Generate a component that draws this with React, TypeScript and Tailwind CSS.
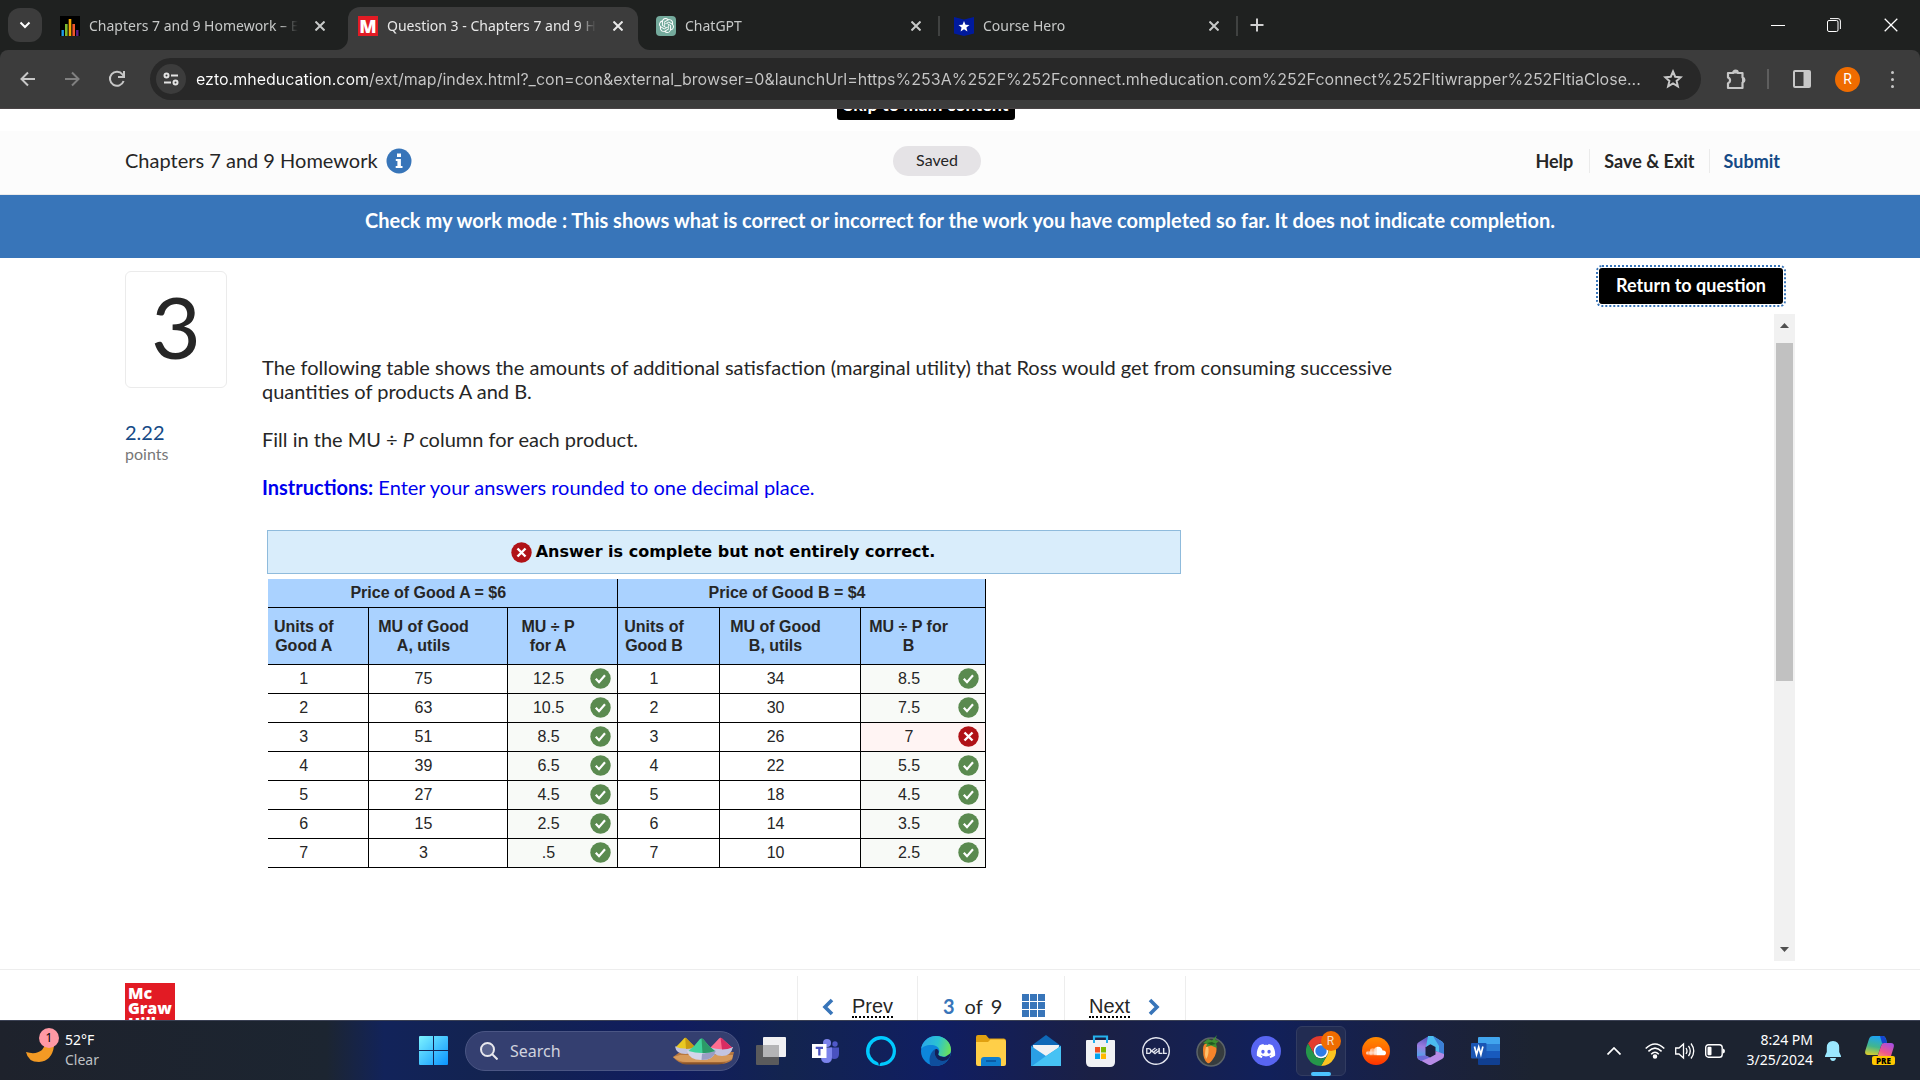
import React, { useId } from 'react';
import type { ReactNode } from 'react';
import { SiDell, SiOpenai } from 'react-icons/si';
import { FaDiscord, FaSoundcloud } from 'react-icons/fa';

const URL_TEXT =
  'ezto.mheducation.com/ext/map/index.html?_con=con&external_browser=0&launchUrl=https%253A%252F%252Fconnect.mheducation.com%252Fconnect%252Fltiwrapper%252FltiaClose...';

/* ---------- Browser window ---------- */

function Cross({ size = 10, width = 2 }: { size?: number; width?: number }) {
  return (
    <svg width={size} height={size} viewBox="0 0 10 10" aria-hidden="true">
      <path d="M0.5 0.5 9.5 9.5M9.5 0.5 0.5 9.5" stroke="currentColor" strokeWidth={width} />
    </svg>
  );
}

function EqualizerIcon() {
  return (
    <svg width="20" height="20" viewBox="0 0 20 20" aria-hidden="true">
      <rect width="20" height="20" fill="#000" />
      <rect x="1.5" y="14" width="2.4" height="6" fill="#1e9be9" />
      <rect x="5" y="8" width="2.6" height="12" fill="#7cb82f" />
      <rect x="8.7" y="3" width="2.6" height="17" fill="#f5a800" />
      <rect x="12.4" y="8" width="2.6" height="12" fill="#f0562b" />
      <rect x="16.1" y="14" width="2.4" height="6" fill="#5c1f87" />
    </svg>
  );
}

function McGrawIcon() {
  return (
    <span className="grid size-5 place-items-center bg-[#e21b24] font-['Open_Sans',sans-serif] text-lg leading-5 font-extrabold text-white">
      M
    </span>
  );
}

function ChatGptIcon() {
  return (
    <span className="grid size-5 place-items-center rounded-[4px] bg-[#74aa9c] text-white">
      <SiOpenai size={15} />
    </span>
  );
}

function CourseHeroIcon() {
  return (
    <svg width="20" height="20" viewBox="0 0 20 20" aria-hidden="true">
      <path d="M0 1 10 3.5 20 1V17.5L10 20 0 17.5Z" fill="#001a9c" />
      <path d="m10 5 1.5 3.7 4 .3-3.1 2.5 1 3.9-3.4-2.1-3.4 2.1 1-3.9L4.500 9l4-.3Z" fill="#fff" />
    </svg>
  );
}

type TabProps = { icon: ReactNode; title: string; active?: boolean; separator?: boolean };

function Tab({ icon, title, active, separator }: TabProps) {
  return (
    <div className="flex h-full w-[298px] min-w-0 items-center">
      <div
        className={
          active
            ? 'relative flex h-full w-[290px] items-center gap-2 rounded-t-xl bg-[#3c3c3c] px-2.5 pb-1.5 text-[#e8e8e8]'
            : 'relative flex h-full w-[290px] items-center gap-2 px-2.5 pb-1.5 text-[#c7c9c8]'
        }
      >
        {active && (
          <>
            <svg className="absolute bottom-0 -left-3" width="12" height="12" aria-hidden="true">
              <path d="M12 0V12H0A12 12 0 0 0 12 0Z" fill="#3c3c3c" />
            </svg>
            <svg className="absolute -right-3 bottom-0" width="12" height="12" aria-hidden="true">
              <path d="M0 0V12H12A12 12 0 0 1 0 0Z" fill="#3c3c3c" />
            </svg>
          </>
        )}
        <span className="shrink-0">{icon}</span>
        <button
          type="button"
          className="min-w-0 flex-1 overflow-hidden pl-px text-left text-sm leading-5 whitespace-nowrap [mask-image:linear-gradient(90deg,#000_91%,transparent)]"
        >
          {title}
        </button>
        <button type="button" aria-label={'Close ' + title} className="ml-1 grid size-5 place-items-center">
          <Cross />
        </button>
      </div>
      {separator && <span className="mb-1.5 ml-0.5 h-5 w-0.5 bg-[#404241]" />}
    </div>
  );
}

function TabStrip() {
  return (
    <div className="flex h-[50px] items-stretch bg-[#1f2120] pl-2">
      <button
        type="button"
        aria-label="Search tabs"
        className="mt-2 grid size-[34px] place-items-center rounded-xl bg-[#3c3c3c] text-white"
      >
        <svg width="12" height="12" viewBox="0 0 12 12" fill="none" aria-hidden="true">
          <path d="m1.500 3.500 4.500 4.500 4.500-4.500" stroke="currentColor" strokeWidth="2" />
        </svg>
      </button>
      <div className="ml-2 flex pt-[7px]">
        <Tab icon={<EqualizerIcon />} title="Chapters 7 and 9 Homework – Economics" />
        <Tab icon={<McGrawIcon />} title="Question 3 - Chapters 7 and 9 Homework" active />
        <Tab icon={<ChatGptIcon />} title="ChatGPT" separator />
        <Tab icon={<CourseHeroIcon />} title="Course Hero" separator />
      </div>
      <button type="button" aria-label="New tab" className="ml-2 self-center text-[#d0d0d0]">
        <svg width="14" height="14" viewBox="0 0 14 14" aria-hidden="true">
          <path d="M7 0.500V13.500M0.500 7H13.500" stroke="currentColor" strokeWidth="2" />
        </svg>
      </button>
      <div className="ml-auto flex text-white">
        <button type="button" aria-label="Minimize" className="grid w-14 place-items-center">
          <span className="h-px w-3.5 bg-white" />
        </button>
        <button type="button" aria-label="Restore" className="grid w-14 place-items-center">
          <svg width="14" height="14" viewBox="0 0 14 14" fill="none" stroke="currentColor" aria-hidden="true">
            <rect x="0.500" y="2.500" width="10.500" height="11" rx="1.500" />
            <path d="M3 .6H11A2.500 2.500 0 0 1 13.400 3V11" />
          </svg>
        </button>
        <button type="button" aria-label="Close window" className="grid w-[58px] place-items-center">
          <Cross size={14} width={0.9} />
        </button>
      </div>
    </div>
  );
}

function Toolbar() {
  return (
    <div className="bg-[#1f2120]">
      <div className="flex h-[59px] items-center rounded-t-lg border-b border-[#4a4446] bg-[#3c3c3c] pr-4 text-[#c7c7c7]">
        <button type="button" aria-label="Back" className="ml-5 grid size-4 place-items-center">
          <svg width="16" height="16" viewBox="0 0 16 16" fill="none" stroke="currentColor" strokeWidth="2" aria-hidden="true">
            <path d="M15 8H2M8 1.500 1.500 8 8 14.500" />
          </svg>
        </button>
        <button type="button" aria-label="Forward" className="ml-7 grid size-4 place-items-center text-[#808080]">
          <svg width="16" height="16" viewBox="0 0 16 16" fill="none" stroke="currentColor" strokeWidth="2" aria-hidden="true">
            <path d="M1 8H14M8 1.500 14.500 8 8 14.500" />
          </svg>
        </button>
        <button type="button" aria-label="Reload" className="ml-7 grid size-[18px] place-items-center">
          <svg width="18" height="18" viewBox="0 0 18 18" fill="none" stroke="currentColor" strokeWidth="2" aria-hidden="true">
            <path d="M15.600 11A7 7 0 1 1 14.500 4.500L16 6.500" />
            <path d="M16 1V7H10" />
          </svg>
        </button>
        <div className="ml-6 flex h-[42px] min-w-0 flex-1 items-center rounded-full bg-[#282828] pr-[18px] pl-1.5">
          <button
            type="button"
            aria-label="View site information"
            className="grid size-[30px] shrink-0 place-items-center rounded-full bg-[#3c3c3c] text-[#e3e3e3]"
          >
            <svg width="16" height="14" viewBox="0 0 16 14" fill="none" stroke="currentColor" strokeWidth="2" aria-hidden="true">
              <circle cx="3.500" cy="3.500" r="2" />
              <path d="M8 3.500H15M1 10.500H8" />
              <circle cx="12.500" cy="10.500" r="2" />
            </svg>
          </button>
          <input
            type="text"
            aria-label="Address"
            defaultValue={URL_TEXT}
            className="ml-2.5 min-w-0 flex-1 bg-[linear-gradient(90deg,#ffffff_174px,#c7c7c7_174px)] bg-clip-text font-['Inter',sans-serif] text-base leading-6 text-transparent outline-none"
          />
          <button type="button" aria-label="Bookmark this tab" className="ml-2 shrink-0">
            <svg width="20" height="20" viewBox="0 0 20 20" fill="none" stroke="currentColor" strokeWidth="2" aria-hidden="true">
              <path d="m10 2.500 2.200 5.200 5.600.500-4.200 3.700 1.300 5.500-4.900-2.900-4.900 2.900 1.300-5.500L2.200 8.200l5.600-.500Z" />
            </svg>
          </button>
        </div>
        <button type="button" aria-label="Extensions" className="ml-6">
          <svg width="22" height="22" viewBox="0 0 22 22" aria-hidden="true">
            <path
              d="M3 5H8.200A2.300 2.300 0 0 1 12.800 5H17.500V9.500A2.600 2.600 0 0 1 17.500 14.500V20H3V15.200A3 3 0 0 0 3 9.500Z"
              fill="none"
              stroke="currentColor"
              strokeWidth="2.200"
              strokeLinejoin="round"
            />
            <path d="M8 5.500A2.500 2.500 0 0 1 13 5.500ZM17 9.400A2.600 2.600 0 0 1 17 14.600Z" fill="currentColor" />
          </svg>
        </button>
        <span className="ml-5 h-5 w-0.5 bg-[#5e5e5e]" />
        <button type="button" aria-label="Side panel" className="ml-6">
          <svg width="18" height="18" viewBox="0 0 18 18" aria-hidden="true">
            <rect x="1" y="1" width="16" height="16" rx="1" fill="none" stroke="currentColor" strokeWidth="2" />
            <path d="M10.500 1H17V17H10.500Z" fill="currentColor" />
          </svg>
        </button>
        <button
          type="button"
          aria-label="Profile"
          className="ml-6 grid size-[25px] place-items-center rounded-full bg-[#ef6c00] font-['Roboto',sans-serif] text-sm leading-5 text-white"
        >
          R
        </button>
        <button type="button" aria-label="Chrome menu" className="ml-5 grid w-6 justify-items-center gap-1">
          <span className="size-[3px] rounded-full bg-current" />
          <span className="size-[3px] rounded-full bg-current" />
          <span className="size-[3px] rounded-full bg-current" />
        </button>
      </div>
    </div>
  );
}

/* ---------- Homework page ---------- */

function PageHeader() {
  return (
    <>
      <div className="flex h-[22px] justify-center overflow-hidden pr-[68px]">
        <a
          href="#question"
          className="-mt-[25px] flex h-9 w-[178px] items-center justify-center rounded-[3px] bg-black pt-1 text-lg leading-6 font-bold whitespace-nowrap text-white"
        >
          Skip to main content
        </a>
      </div>
      <header className="flex h-16 items-center border-b border-[#ebebeb] bg-[#fcfcfc] pr-[140px] pb-1 pl-[125px]">
        <div className="flex w-[768px] items-center gap-2">
          <h1 className="pb-0.5 text-xl leading-6">Chapters 7 and 9 Homework</h1>
          <button type="button" aria-label="Information">
            <svg width="26" height="26" viewBox="0 0 26 26" aria-hidden="true">
              <circle cx="13" cy="13" r="12.500" fill="#3875b9" />
              <path d="M11 5.500H15V8.900H11ZM9.800 11H14.900V18H16.500V20H9.700V18H11.400V13H9.800Z" fill="#fff" />
            </svg>
          </button>
        </div>
        <span className="grid h-[30px] w-[88px] place-items-center rounded-full bg-[#e5e3e6] pb-0.5 text-base leading-5">
          Saved
        </span>
        <nav className="ml-auto flex items-center text-lg leading-6 font-bold">
          <a href="#help" className="pr-4">Help</a>
          <a href="#save" className="border-l border-[#ebebeb] px-3.5">Save &amp; Exit</a>
          <a href="#submit" className="border-l border-[#ebebeb] pl-3.5 text-[#154a86]">Submit</a>
        </nav>
      </header>
      <p className="h-[63px] bg-[#3875b9] pt-[13px] text-center text-xl leading-6 font-bold text-white">
        Check my work mode : This shows what is correct or incorrect for the work you have completed so far. It does not
        indicate completion.
      </p>
    </>
  );
}

function CorrectMark() {
  return (
    <svg width="21" height="21" viewBox="0 0 21 21" role="img" aria-label="correct">
      <circle cx="10.500" cy="10.500" r="10.200" fill="#5a8a4f" />
      <path d="m5.800 10.800 3.200 3.400 6-7" fill="none" stroke="#fff" strokeWidth="2.200" />
    </svg>
  );
}

function WrongMark() {
  return (
    <svg width="21" height="21" viewBox="0 0 21 21" role="img" aria-label="incorrect">
      <circle cx="10.500" cy="10.500" r="10.200" fill="#b01217" />
      <path d="m6.500 6.500 8 8M14.500 6.500l-8 8" fill="none" stroke="#fff" strokeWidth="2.400" />
    </svg>
  );
}

const ROWS = [
  [1, 75, '12.5', 34, '8.5'],
  [2, 63, '10.5', 30, '7.5'],
  [3, 51, '8.5', 26, '7'],
  [4, 39, '6.5', 22, '5.5'],
  [5, 27, '4.5', 18, '4.5'],
  [6, 15, '2.5', 14, '3.5'],
  [7, 3, '.5', 10, '2.5'],
] as const;

function ValueCell({ children }: { children: ReactNode }) {
  return <td className="h-[29px] border border-l-0 border-black pr-7 text-center">{children}</td>;
}

function AnswerCell({ value, wrong }: { value: string; wrong?: boolean }) {
  return (
    <td className={wrong ? 'h-[29px] border border-black bg-[#fff4f3]' : 'h-[29px] border border-black bg-[#f8faf7]'}>
      <div className="flex items-center pr-1.5">
        <span className="flex-1 text-center">{value}</span>
        {wrong ? <WrongMark /> : <CorrectMark />}
      </div>
    </td>
  );
}

function UtilityTable() {
  return (
    <table className="mt-[5px] ml-1.5 w-[717px] table-fixed border-collapse font-['Liberation_Sans',Arial,sans-serif] text-base leading-[19px]">
      <colgroup>
        <col className="w-[100px]" />
        <col className="w-[139px]" />
        <col className="w-[110px]" />
        <col className="w-[102px]" />
        <col className="w-[141px]" />
        <col className="w-[125px]" />
      </colgroup>
      <thead className="bg-[#aad2ff]">
        <tr className="h-7">
          <th scope="colgroup" colSpan={3} className="border-r border-b border-black pr-7">
            Price of Good A = $6
          </th>
          <th scope="colgroup" colSpan={3} className="border-r border-b border-black pr-7">
            Price of Good B = $4
          </th>
        </tr>
        <tr className="h-[57px]">
          <th scope="col" className="border-r border-b border-black pr-7">Units of<br />Good A</th>
          <th scope="col" className="border-r border-b border-black pr-7">MU of Good<br />A, utils</th>
          <th scope="col" className="border-r border-b border-black pr-7">MU ÷ P<br />for A</th>
          <th scope="col" className="border-r border-b border-black pr-7">Units of<br />Good B</th>
          <th scope="col" className="border-r border-b border-black pr-7">MU of Good<br />B, utils</th>
          <th scope="col" className="border-r border-b border-black pr-7">MU ÷ P for<br />B</th>
        </tr>
      </thead>
      <tbody>
        {ROWS.map(([n, muA, perA, muB, perB]) => (
          <tr key={n}>
            <ValueCell>{n}</ValueCell>
            <ValueCell>{muA}</ValueCell>
            <AnswerCell value={perA} />
            <ValueCell>{n}</ValueCell>
            <ValueCell>{muB}</ValueCell>
            <AnswerCell value={perB} wrong={n === 3} />
          </tr>
        ))}
      </tbody>
    </table>
  );
}

function Question() {
  return (
    <main id="question" className="flex min-h-0 flex-1 pr-[125px] pb-2 pl-[125px]">
      <aside className="w-[102px] shrink-0 pt-[13px]">
        <div className="grid h-[117px] place-items-center rounded-md border border-[#ebebeb] pb-2 text-[86px] leading-[104px]">
          3
        </div>
        <p className="mt-8 text-xl leading-6 text-[#154a86]">2.22</p>
        <p className="text-base leading-5 text-[#777777]">points</p>
      </aside>
      <div className="flex min-w-0 flex-1 flex-col pl-[35px]">
        <button
          type="button"
          className="mt-2.5 mr-3 h-9 self-end rounded-[3px] bg-black px-[17px] pb-0.5 text-lg leading-6 font-bold text-white outline-2 outline-offset-1 outline-[#3875b9] outline-dotted"
        >
          Return to question
        </button>
        <div className="mt-2.5 flex min-h-0 flex-1">
          <div className="min-w-0 flex-1 pt-[41px]">
            <div className="max-w-[1140px] space-y-6 text-xl leading-6">
              <p>
                The following table shows the amounts of additional satisfaction (marginal utility) that Ross would get
                from consuming successive quantities of products A and B.
              </p>
              <p>
                Fill in the MU ÷ <em>P</em> column for each product.
              </p>
              <p className="text-[#0000ee]">
                <strong>Instructions:</strong> Enter your answers rounded to one decimal place.
              </p>
            </div>
            <p className="mt-[31px] ml-[5px] flex h-11 w-[914px] items-center justify-center gap-1 border border-[#8fbbdc] bg-[#d9edfb] pr-0.5 font-['DejaVu_Sans',Verdana,sans-serif] text-base leading-6 font-bold text-black">
              <WrongMark />
              Answer is complete but not entirely correct.
            </p>
            <UtilityTable />
          </div>
          <div className="flex w-[21px] flex-col items-center bg-[#f1f1f1]" aria-hidden="true">
            <svg className="mt-[9px] mb-[15px]" width="9" height="5">
              <path d="M4.500 0 9 5H0Z" fill="#505050" />
            </svg>
            <span className="h-[338px] w-[17px] bg-[#c1c1c1]" />
            <svg className="mt-auto mb-[9px]" width="9" height="5">
              <path d="M4.500 5 9 0H0Z" fill="#505050" />
            </svg>
          </div>
        </div>
      </div>
    </main>
  );
}

function Chevron({ flip }: { flip?: boolean }) {
  return (
    <svg className={flip ? '-scale-x-100' : ''} width="12" height="18" viewBox="0 0 12 18" fill="none" aria-hidden="true">
      <path d="M10 2 3 9l7 7" stroke="#3875b9" strokeWidth="3.600" />
    </svg>
  );
}

function PageFooter() {
  return (
    <footer className="relative flex h-[51px] overflow-hidden border-t border-[#ededed] pl-[125px]">
      <a
        href="#home"
        className="mt-[13px] block h-[50px] w-[50px] bg-[#e21b24] pt-[3px] pl-[3px] font-['Open_Sans',sans-serif] text-base leading-[15px] font-extrabold text-white"
      >
        Mc
        <br />
        Graw
        <br />
        Hill
      </a>
      <nav className="mt-1.5 ml-[622px] flex h-[60px] divide-x divide-[#ededed] border-x border-[#ededed] text-xl leading-6">
        <a href="#prev" className="flex w-[120px] items-start gap-[18px] pt-[18px] pl-6 font-['Liberation_Sans',Arial,sans-serif]">
          <span className="pt-1"><Chevron /></span>
          <span className="h-6 border-b-2 border-dotted border-black">Prev</span>
        </a>
        <div className="flex w-[147px] items-start pt-[18px] pl-[25px]">
          <strong className="text-[#3875b9]">3</strong>
          <span className="ml-2.5">of</span>
          <span className="ml-2">9</span>
          <button type="button" aria-label="Question list" className="ml-5">
            <svg width="23" height="23" viewBox="0 0 23 23" fill="#3875b9" aria-hidden="true">
              <path d="M0 0h7v7H0zM8 0h7v7H8zM16 0h7v7h-7zM0 8h7v7H0zM8 8h7v7H8zM16 8h7v7h-7zM0 16h7v7H0zM8 16h7v7H8zM16 16h7v7h-7z" />
            </svg>
          </button>
        </div>
        <a href="#next" className="flex w-[120px] items-start gap-[18px] pt-[18px] pl-6 font-['Liberation_Sans',Arial,sans-serif]">
          <span className="h-6 border-b-2 border-dotted border-black">Next</span>
          <span className="pt-1"><Chevron flip /></span>
        </a>
      </nav>
    </footer>
  );
}

/* ---------- Taskbar ---------- */

function AppButton({ label, children }: { label: string; children: ReactNode }) {
  return (
    <button type="button" aria-label={label} className="grid h-full w-[55px] place-items-center">
      {children}
    </button>
  );
}

function StartIcon() {
  const id = useId();
  return (
    <svg width="29" height="29" viewBox="0 0 29 29" aria-hidden="true">
      <linearGradient id={id} x1="0" y1="0" x2="29" y2="29" gradientUnits="userSpaceOnUse">
        <stop stopColor="#7df3ff" />
        <stop offset="1" stopColor="#0a93ff" />
      </linearGradient>
      <path d="M0 1Q0 0 1 0H14V14H0ZM15 0H28Q29 0 29 1V14H15ZM0 15H14V29H1Q0 29 0 28ZM15 15H29V28Q29 29 28 29H15Z" fill={`url(#${id})`} />
    </svg>
  );
}

function BowlsArt() {
  return (
    <svg width="63" height="30" viewBox="0 0 63 30" aria-hidden="true">
      <path d="M8 16H62L60 24Q55 28 48 28H14Q7 28 1 21Z" fill="#b87840" />
      <path d="M1 21 8 19H61L60 23Q55 26 48 26H14Q7 26 1 21Z" fill="#d69a5c" />
      <path d="M8 26.500H54Q50 28.500 46 28.500H14Q10 28.500 8 26.500Z" fill="#8a552a" />
      <path d="M3 10.500H24Q23 18 13.500 18 4 18 3 10.500Z" fill="#c3c4e0" />
      <path d="M4 11Q9 6 12 2.500 13 1 14.500 2.500L23 11Q13 14 4 11Z" fill="#e9c822" />
      <path d="M13.200 1.500 14.500 2.500 23 11Q19 13 14 13Z" fill="#c79a12" />
      <path d="M38 11H61Q59 20 50 20 41 20 38 11Z" fill="#c3c4e0" />
      <path d="M38.500 11.500Q43 7 47 2.500 48.500 1 50 2.500L60 11.500Q49 15 38.500 11.500Z" fill="#ff6d90" />
      <path d="M48.500 1.500 50 2.500 60 11.500Q56 13.500 50 13.500Z" fill="#d82c62" />
      <path d="M15 14.500H44Q42 24 29.500 24 17 24 15 14.500Z" fill="#d4d6ea" />
      <path d="M30 18 44 14.500Q42 24 29.500 24Z" fill="#9a9dc4" />
      <path d="M16.500 15Q22 11 27.500 3.500 29.500 1.500 31.500 3.500 36 10 43 15 30 19 16.500 15Z" fill="#3fd39a" />
      <path d="M29.500 2 31.500 3.500Q36 10 43 15 38 17 30.500 17.200Z" fill="#2c9a68" />
    </svg>
  );
}

function TaskViewIcon() {
  return (
    <svg width="30" height="28" viewBox="0 0 30 28" aria-hidden="true">
      <rect y="8" width="23" height="20" rx="1" fill="#5a5a5c" />
      <rect x="7" width="23" height="20" rx="1" fill="#f0f0f2" />
      <path d="M7 8H23V20H7Z" fill="#b4b4b6" />
    </svg>
  );
}

function TeamsIcon() {
  return (
    <svg width="28" height="26" viewBox="0 0 28 26" aria-hidden="true">
      <circle cx="23" cy="6" r="2.700" fill="#5059c9" />
      <path d="M18 9.500H27V16Q27 21 22 21 19 21 18 19Z" fill="#4a52c0" />
      <circle cx="15" cy="5" r="4" fill="#7b83eb" />
      <path d="M9 9.500H20V19Q20 25 14.500 25 9 25 9 19Z" fill="#7b83eb" />
      <rect y="6" width="14.500" height="14" fill="#fff" />
      <path d="M3.700 8.700H11V11H8.500V17.500H6.200V11H3.700Z" fill="#4a52c0" />
    </svg>
  );
}

function AlexaIcon() {
  return (
    <svg width="30" height="30" viewBox="0 0 30 30" aria-hidden="true">
      <path
        fillRule="evenodd"
        d="M15 0A15 15 0 1 1 15 30 15 15 0 0 1 15 0ZM15 3.500A11.500 11.500 0 0 0 10.800 25.700Q12.800 26.500 12.700 28.500V30H13.700Q13.200 27 15.500 26.500A11.500 11.500 0 0 0 15 3.500Z"
        fill="#00caff"
      />
    </svg>
  );
}

function EdgeIcon() {
  const id = useId();
  return (
    <svg width="30" height="30" viewBox="0 0 30 30" aria-hidden="true">
      <linearGradient id={id} x1="2" y1="6" x2="30" y2="14" gradientUnits="userSpaceOnUse">
        <stop stopColor="#2aa8e8" />
        <stop offset="0.500" stopColor="#2bc3d2" />
        <stop offset="1" stopColor="#70e352" />
      </linearGradient>
      <circle cx="15" cy="15" r="15" fill="#0d86dc" />
      <path d="M0 13A15 15 0 0 1 15 0C24 0 30 6.500 30 13.500 30 18 27 20.500 23 20.500 18.500 20.500 17 18.500 17.500 17.500 20 14 17 9.500 11.500 9 6 8.500 1.500 10.500 0 13Z" fill={`url(#${id})`} />
      <path d="M10 30C7 25 8.500 16 14.500 13 12 19 16 25 21.500 25 25 25 27 23.500 28.500 21.500A15 15 0 0 1 12 29.700Z" fill="#0f4f9e" />
      <path d="M14.500 13C12 19 16 25 21.500 25 25 25 27 23.500 28.500 21.500L30 17 24 21C19 21 16 18.500 17.500 17.500 18.500 15 17 12.500 14.500 13Z" fill="#131f58" />
    </svg>
  );
}

function FolderIcon() {
  return (
    <svg width="30" height="32" viewBox="0 0 30 32" aria-hidden="true">
      <path d="M0 2Q0 0 2 0H10L13 3.500H28Q30 3.500 30 6V12H0Z" fill="#e0a010" />
      <path d="M0 7H12L14.500 4.500H28Q30 4.500 30 7V29Q30 31 28 31H2Q0 31 0 29Z" fill="#ffcf48" />
      <path d="M5 31V25Q5 22 8 22H22Q25 22 25 25V31Z" fill="#0f7fd0" />
      <path d="M10 26H20" stroke="#0a4f96" strokeWidth="1.500" />
    </svg>
  );
}

function MailIcon() {
  return (
    <svg width="30" height="32" viewBox="0 0 30 32" aria-hidden="true">
      <path d="M0 11 15 0 30 11V18H0Z" fill="#0f68b8" />
      <path d="M2 10H28L27 22H3Z" fill="#f1f1f4" />
      <path d="M0 11 15 21 30 11V31H0Z" fill="#2a9fe6" />
      <path d="M30 11V31H1L15 21Z" fill="#46c2f4" />
    </svg>
  );
}

function StoreIcon() {
  return (
    <svg width="29" height="32" viewBox="0 0 29 32" aria-hidden="true">
      <path d="M8 7V1.500H21V7" fill="none" stroke="#25b1ec" strokeWidth="2.200" />
      <path d="M0 6Q0 5 1 5H28Q29 5 29 6V27Q29 32 24 32H5Q0 32 0 27Z" fill="#f1f2f4" />
      <path d="M9 12H14V17.500H9Z" fill="#f25022" />
      <path d="M15 12H20V17.500H15Z" fill="#7fba00" />
      <path d="M9 18.500H14V24H9Z" fill="#00a4ef" />
      <path d="M15 18.500H20V24H15Z" fill="#ffb900" />
      <path d="M8 5V8M21 5V8" stroke="#25b1ec" strokeWidth="2" />
    </svg>
  );
}

function FruitIcon() {
  return (
    <svg width="30" height="32" viewBox="0 0 30 32" aria-hidden="true">
      <circle cx="15" cy="17" r="14" fill="#363c3e" stroke="#5c6468" strokeWidth="1.500" />
      <path d="M9 9Q15 6 20 11 22 17 17 24 14 29 11.500 28 7 25 7 15 7 10 9 9Z" fill="#f5842a" />
      <path d="M10 12Q13 10 12.500 17 12 22 10 24 8 19 10 12Z" fill="#ffc06a" />
      <path d="M7 8 12 4 16 5.500 21 0 19 5 23 6 20 8.500 21 13 15 10.500 10 12 11 9Z" fill="#3f8f32" />
      <path d="M11 8 16 7 20 9 15 10Z" fill="#205a20" />
    </svg>
  );
}

function ChromeIcon() {
  return (
    <svg width="30" height="30" viewBox="0 0 30 30" aria-hidden="true">
      <path d="M2 7.500A15 15 0 0 1 28 7.500H15A7.500 7.500 0 0 0 8.500 18.700Z" fill="#e33b2e" />
      <path d="M28 7.500A15 15 0 0 1 15 30L21.500 18.700A7.500 7.500 0 0 0 15 7.500Z" fill="#fcc420" />
      <path d="M15 30A15 15 0 0 1 2 7.500L8.500 18.700A7.500 7.500 0 0 0 21.500 18.700Z" fill="#25964a" />
      <circle cx="15" cy="15" r="7.300" fill="#fff" />
      <circle cx="15" cy="15" r="5.700" fill="#2f7ce8" />
    </svg>
  );
}

function Microsoft365Icon() {
  const id = useId();
  return (
    <svg width="27" height="29" viewBox="0 0 27 29" aria-hidden="true">
      <linearGradient id={id} x1="10" y1="0" x2="5" y2="22" gradientUnits="userSpaceOnUse">
        <stop stopColor="#4b4fb8" />
        <stop offset="0.500" stopColor="#9a7be0" />
        <stop offset="1" stopColor="#4aa6ea" />
      </linearGradient>
      <path d="M10 1 16 0 14 8 8.500 11V20L0 21V9Q0 7 2 6Z" fill={`url(#${id})`} />
      <path d="M11 0H16L25 5.500Q27 7 27 9V19L18.500 15V11L13 8 9 11Z" fill="#4bbcf0" />
      <path d="M16 0 25 5.500Q27 7 27 9V19L22 16V10Z" fill="#3c7fd6" />
      <path d="M27 18V20Q27 22 25 23L15 28.500Q13 29.500 11 28.500L1 23 0 20.500 8.500 19.500 13 21.500 18.500 18.500V15Z" fill="#b68be6" />
      <path d="M0 20 8.500 19.500 13 21.500 4 25 1 23Z" fill="#6a6ad8" />
    </svg>
  );
}

function WordIcon() {
  return (
    <svg width="29" height="28" viewBox="0 0 29 28" aria-hidden="true">
      <path d="M7 1Q7 0 8 0H28Q29 0 29 1V7H7Z" fill="#41a5ee" />
      <path d="M7 7H29V14H7Z" fill="#2b7cd3" />
      <path d="M7 14H29V21H7Z" fill="#185abd" />
      <path d="M7 21H29V27Q29 28 28 28H8Q7 28 7 27Z" fill="#103f91" />
      <rect y="6" width="15.500" height="15.500" rx="1" fill="#1a56b4" />
      <path d="m3.500 9.500 2 8 2.200-7.500 2.200 7.500 2-8" fill="none" stroke="#fff" strokeWidth="1.700" />
    </svg>
  );
}

function CopilotIcon() {
  const a = useId();
  const b = useId();
  return (
    <span className="relative block h-[29px] w-[29px]">
      <svg width="29" height="24" viewBox="0 0 29 24" aria-hidden="true">
        <linearGradient id={a} x1="8" y1="0" x2="4" y2="20" gradientUnits="userSpaceOnUse">
          <stop stopColor="#1fa4f0" />
          <stop offset="0.500" stopColor="#42b68c" />
          <stop offset="1" stopColor="#f0cf20" />
        </linearGradient>
        <linearGradient id={b} x1="24" y1="7" x2="17" y2="23" gradientUnits="userSpaceOnUse">
          <stop stopColor="#a84fe0" />
          <stop offset="0.600" stopColor="#f0568a" />
          <stop offset="1" stopColor="#f8a060" />
        </linearGradient>
        <path d="M8 0H18Q20 0 21 3L22 7H19Q17 7 16 10L13 19H3Q-1 19 .5 14L4 3Q5 0 8 0Z" fill={`url(#${a})`} />
        <path d="M15 0H18Q20 0 21 3L22 7H17Z" fill="#1546d0" />
        <path d="M19 7H26Q30 7 28.500 12L26 20Q25 23 22 23H9Q12 23 13 19L16 10Q17 7 19 7Z" fill={`url(#${b})`} />
      </svg>
      <span className="absolute bottom-0 left-[7px] h-[9px] w-[23px] rounded-[2px] bg-[#ffc800] text-center font-['Open_Sans',sans-serif] text-[8px] leading-[9px] font-extrabold text-black">
        PRE
      </span>
    </span>
  );
}

function Weather() {
  return (
    <button type="button" className="flex min-w-0 flex-1 items-center pb-0.5 pl-[25px] text-left">
      <span className="relative block h-7 w-8">
        <svg className="absolute bottom-0 left-0" width="30" height="30" viewBox="0 0 30 30" aria-hidden="true">
          <path d="M1 18Q3 28 14 28 27 27 29 12 27 4 19 3 22 10 17 16 11 21 1 18Z" fill="#f39a24" />
        </svg>
        <span className="absolute -top-2 left-[14px] grid size-5 place-items-center rounded-full bg-[#ff99a4] text-xs leading-4 text-black">
          1
        </span>
      </span>
      <span className="ml-2 text-sm leading-5 text-white">
        52°F
        <br />
        <span className="text-[#bfc1c5]">Clear</span>
      </span>
    </button>
  );
}

function Taskbar() {
  return (
    <div className="flex h-[60px] border-t border-[#3b4154] bg-[linear-gradient(90deg,#1e222c_0%,#1c2531_17%,#12235a_20%,#13234f_26%,#101c60_35%,#13244f_41%,#101e62_49%,#1b2044_57%,#11205a_66%,#1a2140_74%,#1c2330_80%,#1c2330_100%)]">
      <Weather />
      <div className="flex items-center">
        <AppButton label="Start"><StartIcon /></AppButton>
        <label className="mr-[3px] ml-1 flex h-10 w-[275px] items-center rounded-full border border-[#4b5684] bg-[#343f70] pr-1 pl-3.5">
          <svg width="18" height="18" viewBox="0 0 18 18" fill="none" stroke="#e8e8ee" strokeWidth="2" aria-hidden="true">
            <circle cx="7.500" cy="7.500" r="6.500" fill="#56608c" />
            <path d="m12 12 5.500 5.500" />
          </svg>
          <input
            type="search"
            placeholder="Search"
            aria-label="Search"
            className="ml-3 min-w-0 flex-1 text-base leading-6 outline-none placeholder:text-[#d0d3de]"
          />
          <BowlsArt />
        </label>
        <AppButton label="Task view"><TaskViewIcon /></AppButton>
        <AppButton label="Teams"><TeamsIcon /></AppButton>
        <AppButton label="Alexa"><AlexaIcon /></AppButton>
        <AppButton label="Edge"><EdgeIcon /></AppButton>
        <AppButton label="File Explorer"><FolderIcon /></AppButton>
        <AppButton label="Mail"><MailIcon /></AppButton>
        <AppButton label="Microsoft Store"><StoreIcon /></AppButton>
        <AppButton label="Dell"><SiDell size={28} color="#e4e6f0" /></AppButton>
        <AppButton label="FL Studio"><FruitIcon /></AppButton>
        <AppButton label="Discord">
          <span className="grid size-[30px] place-items-center rounded-full bg-[#5865f2] text-white">
            <FaDiscord size={20} />
          </span>
        </AppButton>
        <AppButton label="Chrome">
          <span className="relative grid size-[50px] place-items-center rounded-md border border-[#323c61] bg-[#222c52]">
            <ChromeIcon />
            <span className="absolute top-1 right-1 grid size-5 place-items-center rounded-full bg-[#ef6c00] font-['Roboto',sans-serif] text-xs leading-4 text-[#f6dcc6]">
              R
            </span>
            <span className="absolute -bottom-px h-1 w-5 rounded-full bg-[#4cc2ff]" />
          </span>
        </AppButton>
        <AppButton label="SoundCloud">
          <span className="grid size-7 place-items-center rounded-full bg-linear-to-b from-[#ff8a00] to-[#ff3000] text-white">
            <FaSoundcloud size={20} />
          </span>
        </AppButton>
        <AppButton label="Microsoft 365"><Microsoft365Icon /></AppButton>
        <AppButton label="Word"><WordIcon /></AppButton>
      </div>
      <div className="flex min-w-0 flex-1 items-center justify-end pr-[26px] text-white">
        <button type="button" aria-label="Show hidden icons">
          <svg width="14" height="8" viewBox="0 0 14 8" fill="none" stroke="currentColor" strokeWidth="1.700" aria-hidden="true">
            <path d="m0.500 7.500 6.500-6.500 6.500 6.500" />
          </svg>
        </button>
        <button type="button" aria-label="Network, volume and battery" className="ml-6 flex items-center gap-2.5">
          <svg width="20" height="16" viewBox="0 0 20 16" fill="none" stroke="currentColor" strokeWidth="1.500" aria-hidden="true">
            <path d="M0.700 5.500Q10-3.500 19.300 5.500M3.400 8.400Q10 1.800 16.600 8.400M6.200 11.200Q10 7.400 13.800 11.200" />
            <circle cx="10" cy="13.500" r="1.500" fill="currentColor" />
          </svg>
          <svg width="20" height="18" viewBox="0 0 20 18" fill="none" stroke="currentColor" strokeWidth="1.300" aria-hidden="true">
            <path d="M.7 6H4L8.500 2V16L4 12H.7Z" />
            <path d="M11 6Q13 9 11 12M13.500 3.800Q17 9 13.500 14.200M16 1.500Q21.500 9 16 16.500" />
          </svg>
          <svg width="20" height="14" viewBox="0 0 20 14" aria-hidden="true">
            <rect x="0.700" y="0.700" width="16.500" height="12.500" rx="2.800" fill="none" stroke="currentColor" strokeWidth="1.400" />
            <rect x="2.500" y="2.700" width="4" height="8.500" rx="1" fill="currentColor" />
            <path d="M18 4.500Q20 5 20 7T18 9.500Z" fill="currentColor" />
          </svg>
        </button>
        <span className="ml-[22px] pb-0.5 text-right text-sm leading-5 whitespace-nowrap">
          8:24 PM
          <br />
          3/25/2024
        </span>
        <button type="button" aria-label="Notifications" className="ml-3">
          <svg width="16" height="20" viewBox="0 0 16 20" fill="#9be8ff" aria-hidden="true">
            <path d="M8 0Q14 0 14.200 6.500V11L16 15V16H0V15L1.800 11V6.500Q2 0 8 0ZM5 17H11Q10.500 20 8 20T5 17Z" />
          </svg>
        </button>
        <button type="button" aria-label="Copilot" className="ml-6">
          <CopilotIcon />
        </button>
      </div>
    </div>
  );
}

export default function App() {
  return (
    <div className="flex min-h-screen flex-col bg-white font-['Noto_Sans',sans-serif]">
      <TabStrip />
      <Toolbar />
      <div className="flex flex-1 flex-col font-['Lato',sans-serif] text-[#262626]">
        <PageHeader />
        <Question />
        <PageFooter />
      </div>
      <Taskbar />
    </div>
  );
}
